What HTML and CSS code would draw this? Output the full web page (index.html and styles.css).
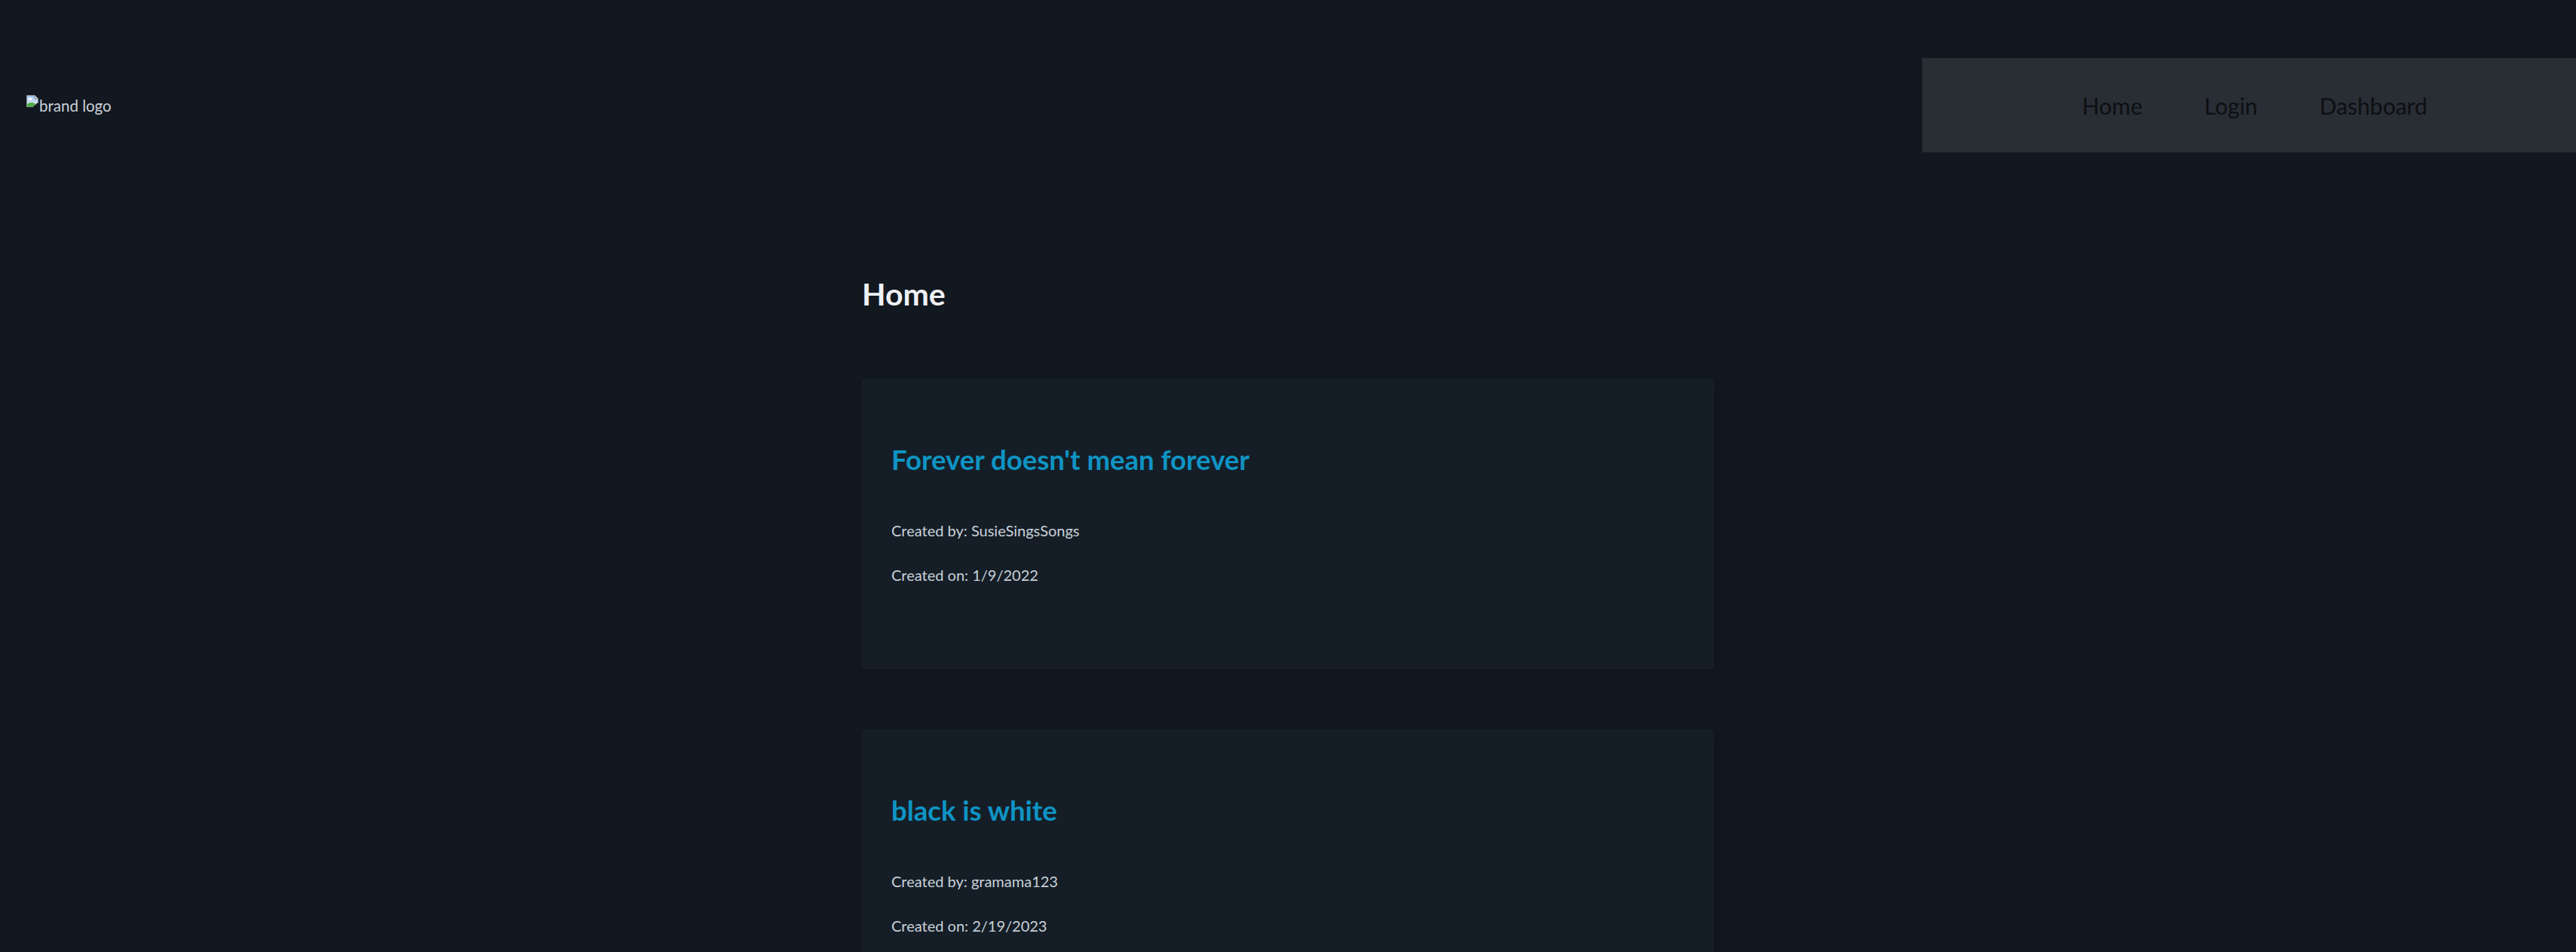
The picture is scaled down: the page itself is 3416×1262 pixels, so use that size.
FILE: index.html
```html
<!DOCTYPE html>
<html lang="en">
<head>
<meta charset="utf-8">
<title>Home</title>
<link rel="stylesheet" href="styles.css">
</head>
<body>
<header class="site-header">
  <a class="brand" href="#">
    <svg class="broken-img" width="16" height="16" viewBox="0 0 16 16" aria-hidden="true">
      <defs>
        <linearGradient id="sky" x1="0" y1="0" x2="0" y2="1">
          <stop offset="0" stop-color="#9cc3ea"/>
          <stop offset="1" stop-color="#e4eef8"/>
        </linearGradient>
      </defs>
      <path d="M0.5 0.5 H11 L15.5 5 V10.5 L9 15.5 H0.5 Z" fill="url(#sky)" stroke="#8a9098" stroke-width="1"/>
      <path d="M11 0.5 V5 H15.5" fill="#d0d4d8" stroke="#8a9098" stroke-width="1"/>
      <ellipse cx="5" cy="5" rx="3" ry="1.6" fill="#ffffff"/>
      <path d="M1 15 V12 Q5 8.5 12 11.5 L9 15 Z" fill="#4caf3e"/>
      <path d="M9 15.5 L15.5 10.5" stroke="#2b2b2b" stroke-width="1.2"/>
    </svg>
    <span class="brand-alt">brand logo</span>
  </a>
  <nav class="main-nav">
    <a class="nav-link" href="#">Home</a>
    <a class="nav-link" href="#">Login</a>
    <a class="nav-link" href="#">Dashboard</a>
  </nav>
</header>

<main class="content">
  <h1 class="page-title">Home</h1>

  <article class="post-card">
    <h2 class="post-title">Forever doesn't mean forever</h2>
    <p class="post-meta">Created by: SusieSingsSongs</p>
    <p class="post-meta">Created on: 1/9/2022</p>
  </article>

  <article class="post-card">
    <h2 class="post-title">black is white</h2>
    <p class="post-meta">Created by: gramama123</p>
    <p class="post-meta">Created on: 2/19/2023</p>
  </article>
</main>
</body>
</html>
```

FILE: styles.css
```css
* {
  box-sizing: border-box;
}

html, body {
  margin: 0;
  padding: 0;
}

body {
  background: #12181f;
  font-family: Lato, "Noto Sans", "Liberation Sans", sans-serif;
  color: #c9d1d9;
}

.site-header {
  display: flex;
  align-items: center;
  justify-content: space-between;
  margin-top: 77px;
  height: 125px;
  padding-left: 35px;
}

.brand {
  display: flex;
  align-items: flex-start;
  text-decoration: none;
  color: #c9d1d9;
}

.broken-img {
  display: block;
  margin-top: -2px;
  flex: none;
}

.brand-alt {
  font-size: 20.5px;
  line-height: 24px;
  margin-left: 1px;
}

.main-nav {
  display: flex;
  align-items: center;
  gap: 82px;
  width: 867px;
  height: 125px;
  padding-left: 212px;
  background: #292e35;
}

.nav-link {
  font-size: 30px;
  line-height: 40px;
  color: #0d0f12;
  text-decoration: none;
}

.content {
  width: 1130px;
  margin: 164px auto 0;
}

.page-title {
  margin: 0 0 88px;
  font-size: 41px;
  line-height: 48px;
  font-weight: 700;
  color: #eef1f4;
}

.post-card {
  background: #151e27;
  border-radius: 4px;
  box-shadow: 2px 4px 10px rgba(0, 0, 0, 0.14);
  padding: 83px 39px 113px;
  margin-bottom: 80px;
}

.post-title {
  margin: 0 0 58px;
  font-size: 36.5px;
  line-height: 48px;
  font-weight: 700;
  color: #0f94c4;
}

.post-meta {
  margin: 0 0 35px;
  font-size: 20px;
  line-height: 24px;
  color: #c9d1d9;
}

.post-meta:last-child {
  margin-bottom: 0;
}
```
